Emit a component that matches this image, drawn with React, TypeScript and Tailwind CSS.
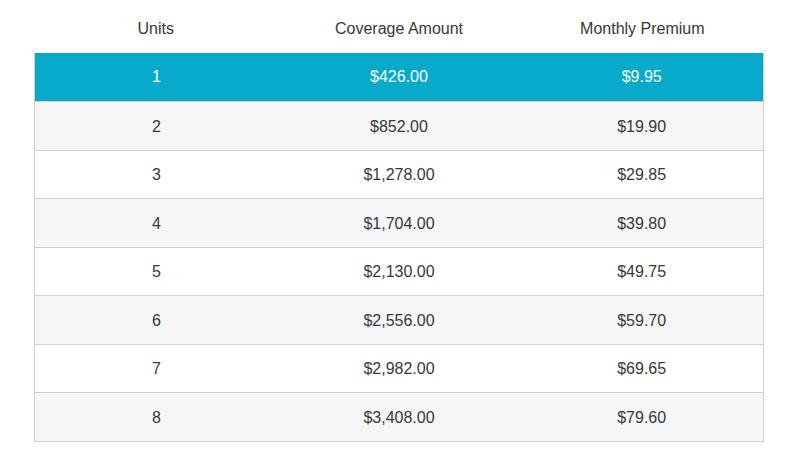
const rows = [
  ["1", "$426.00", "$9.95"],
  ["2", "$852.00", "$19.90"],
  ["3", "$1,278.00", "$29.85"],
  ["4", "$1,704.00", "$39.80"],
  ["5", "$2,130.00", "$49.75"],
  ["6", "$2,556.00", "$59.70"],
  ["7", "$2,982.00", "$69.65"],
  ["8", "$3,408.00", "$79.60"],
];

export default function App() {
  return (
    <div className="h-[469px] w-[790px] bg-white font-['Liberation_Sans',Arial,sans-serif] text-[16px] text-[#383838]">
      <div className="ml-[34px] w-[730px]">
        <div className="grid h-[53px] grid-cols-3 items-center pt-[5px] text-center">
          <div>Units</div>
          <div>Coverage Amount</div>
          <div>Monthly Premium</div>
        </div>
        <div className="border-x border-b border-[#cfcfcf]">
          {rows.map((r, i) => (
            <div
              key={r[0]}
              className={
                i === 0
                  ? "grid h-[48px] grid-cols-3 items-center bg-[#08aacc] text-center text-white"
                  : i % 2 === 1
                    ? "grid h-[48.5px] grid-cols-3 items-center border-t border-[#d0d0d0] bg-[#f6f6f6] pt-[2px] text-center"
                    : "grid h-[48.5px] grid-cols-3 items-center border-t border-[#d0d0d0] bg-white pt-[2px] text-center"
              }
            >
              <div>{r[0]}</div>
              <div>{r[1]}</div>
              <div>{r[2]}</div>
            </div>
          ))}
        </div>
      </div>
    </div>
  );
}
